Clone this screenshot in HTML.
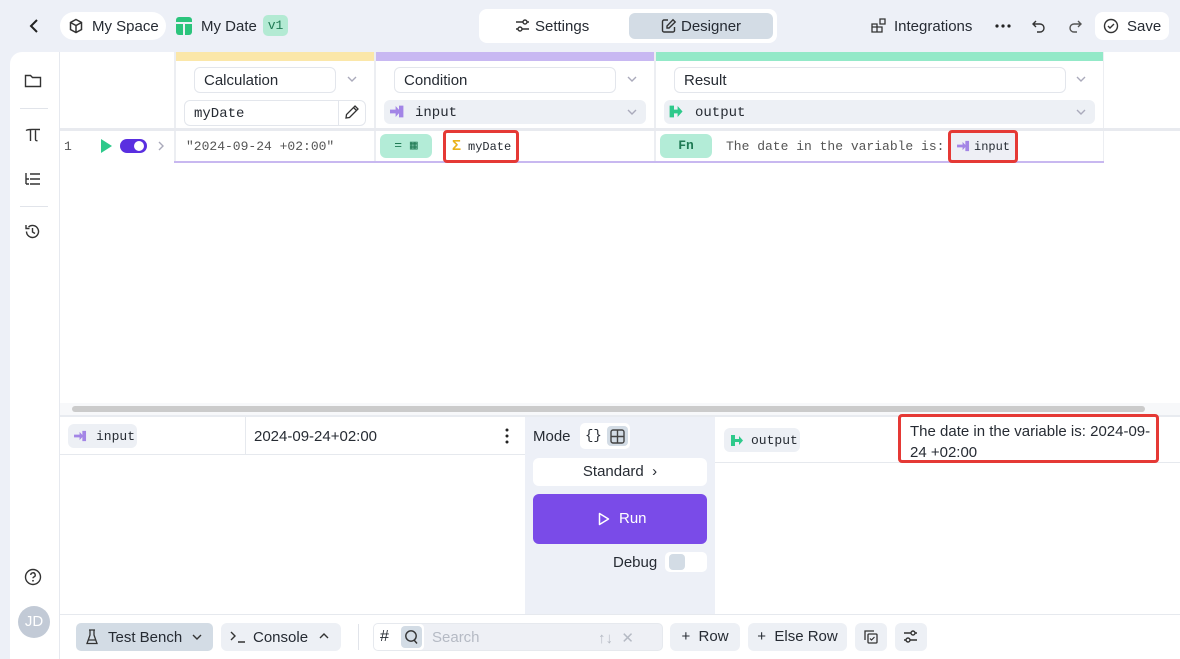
<!DOCTYPE html>
<html><head><style>
*{box-sizing:border-box;margin:0;padding:0}
body{width:1180px;height:659px;overflow:hidden;background:#edf0f7;font-family:"Liberation Sans",sans-serif;color:#262b33;position:relative;font-size:15px}
.a{position:absolute}
.mono{font-family:"Liberation Mono",monospace}
.pill{background:#fff;border-radius:14px}
.sel{border:1px solid #e3e6ec;border-radius:6px;background:#fff;height:26px;font-size:15px;padding:4px 9px}
.gb{background:#edf0f5;border-radius:6px}
svg{display:block}
</style></head><body>
<!-- top bar -->
<svg class="a" style="left:27px;top:18px" width="14" height="16" viewBox="0 0 14 16"><path d="M10 2L4 8l6 6" stroke="#222" stroke-width="2" fill="none"/></svg>
<div class="a pill" style="left:60px;top:12px;width:106px;height:28px"></div>
<svg class="a" style="left:68px;top:18px" width="16" height="16" viewBox="0 0 16 16"><path d="M8 1.5l5.5 3v7L8 14.5l-5.5-3v-7zM2.5 4.5L8 7.5l5.5-3M8 7.5v7" stroke="#333" stroke-width="1.5" fill="none"/></svg>
<div class="a" style="left:92px;top:18px;font-size:15px">My Space</div>
<div class="a" style="left:176px;top:17px;width:16px;height:18px;border-radius:3px;background:#2bc47c"></div>
<div class="a" style="left:176px;top:22px;width:16px;height:2px;background:#edf0f7"></div>
<div class="a" style="left:183px;top:22px;width:2px;height:13px;background:#edf0f7"></div>
<div class="a" style="left:201px;top:18px">My Date</div>
<div class="a mono" style="left:263px;top:15px;width:25px;height:21px;border-radius:5px;background:#b3ead3;color:#1f7a54;font-size:13px;text-align:center;line-height:21px">v1</div>
<div class="a" style="left:479px;top:9px;width:298px;height:34px;background:#fff;border-radius:8px"></div>
<div class="a" style="left:629px;top:13px;width:144px;height:26px;background:#d3dce5;border-radius:6px"></div>
<svg class="a" style="left:515px;top:18px" width="15" height="15" viewBox="0 0 15 15"><path d="M1 4h7M12 4h2M1 11h2M7 11h7" stroke="#333" stroke-width="1.4"/><circle cx="10" cy="4" r="2" stroke="#333" fill="none" stroke-width="1.4"/><circle cx="5" cy="11" r="2" stroke="#333" fill="none" stroke-width="1.4"/></svg>
<div class="a" style="left:535px;top:18px">Settings</div>
<svg class="a" style="left:661px;top:18px" width="16" height="16" viewBox="0 0 16 16"><path d="M7 2H3a1.5 1.5 0 0 0-1.5 1.5v9A1.5 1.5 0 0 0 3 14h9a1.5 1.5 0 0 0 1.5-1.5V9M12 1.8l2.2 2.2L8 10H6V8z" stroke="#333" stroke-width="1.4" fill="none"/></svg>
<div class="a" style="left:681px;top:18px">Designer</div>
<svg class="a" style="left:871px;top:18px" width="15" height="15" viewBox="0 0 15 15"><path d="M1 6h5v8H1zM6 9h5v5H6zM1 9h5M9 1h5v5H9z" stroke="#333" stroke-width="1.3" fill="none"/></svg>
<div class="a" style="left:894px;top:18px">Integrations</div>
<svg class="a" style="left:995px;top:24px" width="16" height="4" viewBox="0 0 16 4"><circle cx="2" cy="2" r="1.6" fill="#222"/><circle cx="8" cy="2" r="1.6" fill="#222"/><circle cx="14" cy="2" r="1.6" fill="#222"/></svg>
<svg class="a" style="left:1031px;top:18px" width="16" height="16" viewBox="0 0 16 16"><path d="M5 3L2 6l3 3M2 6h7a4 4 0 0 1 0 8H6" stroke="#333" stroke-width="1.4" fill="none"/></svg>
<svg class="a" style="left:1067px;top:18px" width="16" height="16" viewBox="0 0 16 16"><path d="M11 3l3 3-3 3M14 6H7a4 4 0 0 0 0 8h3" stroke="#555" stroke-width="1.4" fill="none"/></svg>
<div class="a pill" style="left:1095px;top:12px;width:74px;height:28px;border-radius:8px"></div>
<svg class="a" style="left:1103px;top:18px" width="16" height="16" viewBox="0 0 16 16"><circle cx="8" cy="8" r="6.5" stroke="#333" stroke-width="1.4" fill="none"/><path d="M5 8l2 2 4-4" stroke="#333" stroke-width="1.4" fill="none"/></svg>
<div class="a" style="left:1127px;top:18px">Save</div>

<!-- main panel -->
<div class="a" style="left:10px;top:52px;width:1170px;height:607px;background:#fff;border-radius:12px 0 0 0"></div>
<div class="a" style="left:59px;top:52px;width:1px;height:607px;background:#e6e9ef"></div>
<!-- sidebar icons -->
<svg class="a" style="left:24px;top:73px" width="18" height="16" viewBox="0 0 18 16"><path d="M1.5 2.5h5l2 2h8v9h-15z" stroke="#333" stroke-width="1.4" fill="none"/></svg>
<div class="a" style="left:20px;top:108px;width:28px;height:1px;background:#e1e4ea"></div>
<svg class="a" style="left:25px;top:127px" width="16" height="16" viewBox="0 0 16 16"><path d="M1 3.5C3 2 6 2.5 15 2.5M5.5 3v11M10.5 3v9.5c0 1 .8 1.5 2 1" stroke="#333" stroke-width="1.4" fill="none"/></svg>
<svg class="a" style="left:25px;top:172px" width="16" height="14" viewBox="0 0 16 14"><path d="M1 1v11M5 2h10M5 7h10M5 12h10M1 7h3M1 12h3" stroke="#333" stroke-width="1.4" fill="none"/></svg>
<div class="a" style="left:20px;top:206px;width:28px;height:1px;background:#e1e4ea"></div>
<svg class="a" style="left:24px;top:223px" width="17" height="17" viewBox="0 0 17 17"><path d="M2.5 8.5a6 6 0 1 0 2-4.5M2 2v3.5h3.5M8.5 5v4l2.5 1.5" stroke="#333" stroke-width="1.4" fill="none"/></svg>
<svg class="a" style="left:24px;top:568px" width="18" height="18" viewBox="0 0 18 18"><circle cx="9" cy="9" r="7.5" stroke="#333" stroke-width="1.4" fill="none"/><path d="M6.8 7a2.2 2.2 0 1 1 3 2c-.6.3-.8.7-.8 1.3" stroke="#333" stroke-width="1.4" fill="none"/><circle cx="9" cy="12.8" r=".9" fill="#333"/></svg>
<div class="a" style="left:18px;top:606px;width:32px;height:32px;border-radius:16px;background:#c2cad6;color:#fff;text-align:center;line-height:32px;font-size:15px">JD</div>

<!-- table headers -->
<div class="a" style="left:176px;top:52px;width:198px;height:9px;background:#fbe7a9"></div>
<div class="a" style="left:376px;top:52px;width:278px;height:9px;background:#c8b8f2"></div>
<div class="a" style="left:656px;top:52px;width:447px;height:9px;background:#93e9c8"></div>
<div class="a" style="left:174px;top:52px;width:2px;height:110px;background:#eceef2"></div>
<div class="a" style="left:374px;top:52px;width:2px;height:110px;background:#eceef2"></div>
<div class="a" style="left:654px;top:52px;width:2px;height:110px;background:#eceef2"></div>
<div class="a" style="left:1103px;top:52px;width:1px;height:110px;background:#eceef2"></div>
<div class="a" style="left:60px;top:128px;width:1120px;height:3px;background:#e8eaef"></div>

<div class="a sel" style="left:194px;top:67px;width:142px">Calculation</div>
<svg class="a" style="left:347px;top:76px" width="10" height="6" viewBox="0 0 10 6"><path d="M1 1l4 4 4-4" stroke="#aab" stroke-width="1.4" fill="none"/></svg>
<div class="a sel mono" style="left:184px;top:100px;width:182px;font-size:14px;padding-top:5px">myDate</div>
<div class="a" style="left:338px;top:100px;width:1px;height:26px;background:#e3e6ec"></div>
<svg class="a" style="left:344px;top:104px" width="16" height="16" viewBox="0 0 16 16"><path d="M11 2l3 3-8.5 8.5L2 14l.5-3.5zM9.5 3.5l3 3" stroke="#333" stroke-width="1.3" fill="none"/></svg>

<div class="a sel" style="left:394px;top:67px;width:222px">Condition</div>
<svg class="a" style="left:627px;top:76px" width="10" height="6" viewBox="0 0 10 6"><path d="M1 1l4 4 4-4" stroke="#aab" stroke-width="1.4" fill="none"/></svg>
<div class="a gb" style="left:384px;top:100px;width:262px;height:24px"></div>
<svg class="a" style="left:390px;top:105px" width="14" height="13" viewBox="0 0 14 13"><path d="M0 5h6V2l4 4.5-4 4.5V8H0z M9 1h4v11H9" fill="#a385e6" stroke="#a385e6" stroke-width=".8"/></svg>
<div class="a mono" style="left:415px;top:105px;font-size:14px">input</div>
<svg class="a" style="left:627px;top:109px" width="10" height="6" viewBox="0 0 10 6"><path d="M1 1l4 4 4-4" stroke="#aab" stroke-width="1.4" fill="none"/></svg>

<div class="a sel" style="left:674px;top:67px;width:392px">Result</div>
<svg class="a" style="left:1076px;top:76px" width="10" height="6" viewBox="0 0 10 6"><path d="M1 1l4 4 4-4" stroke="#aab" stroke-width="1.4" fill="none"/></svg>
<div class="a gb" style="left:664px;top:100px;width:431px;height:24px"></div>
<svg class="a" style="left:669px;top:105px" width="14" height="13" viewBox="0 0 14 13"><path d="M5 1H1v11h4M5 5h4V2l4 4.5-4 4.5V8H5z" fill="#2ec98b" stroke="#2ec98b" stroke-width=".8"/></svg>
<div class="a mono" style="left:695px;top:105px;font-size:14px">output</div>
<svg class="a" style="left:1076px;top:109px" width="10" height="6" viewBox="0 0 10 6"><path d="M1 1l4 4 4-4" stroke="#aab" stroke-width="1.4" fill="none"/></svg>

<!-- row 1 -->
<div class="a" style="left:174px;top:161px;width:930px;height:2px;background:#c8b8f0"></div>
<div class="a mono" style="left:64px;top:139px;font-size:13px;color:#555">1</div>
<svg class="a" style="left:100px;top:139px" width="12" height="14" viewBox="0 0 12 14"><path d="M1 0l11 7-11 7z" fill="#2ec98b"/></svg>
<div class="a" style="left:120px;top:139px;width:27px;height:14px;border-radius:7px;background:#5a2fe0"></div>
<div class="a" style="left:134px;top:141px;width:10px;height:10px;border-radius:5px;background:#fff"></div>
<svg class="a" style="left:158px;top:141px" width="6" height="10" viewBox="0 0 6 10"><path d="M1 1l4 4-4 4" stroke="#aab" stroke-width="1.4" fill="none"/></svg>
<div class="a mono" style="left:186px;top:139px;font-size:13px;color:#555">"2024-09-24 +02:00"</div>
<div class="a mono" style="left:380px;top:134px;width:52px;height:24px;border-radius:6px;background:#b3ecd7;color:#1f7a54;font-size:13px;text-align:center;line-height:24px">= ▦</div>
<div class="a" style="left:443px;top:130px;width:76px;height:33px;border:3px solid #e53935;border-radius:4px"></div>
<div class="a" style="left:452px;top:137px;color:#e9b21c;font-size:15px;font-weight:bold">Σ</div>
<div class="a mono" style="left:468px;top:140px;font-size:12px">myDate</div>
<div class="a mono" style="left:660px;top:134px;width:52px;height:24px;border-radius:6px;background:#b3ecd7;color:#1f7a54;font-size:13px;text-align:center;line-height:24px;font-weight:bold">Fn</div>
<div class="a mono" style="left:726px;top:139px;font-size:13px;color:#555">The date in the variable is:</div>
<div class="a" style="left:948px;top:130px;width:70px;height:33px;border:3px solid #e53935;border-radius:4px;background:#eeeff5"></div>
<svg class="a" style="left:957px;top:140px" width="13" height="12" viewBox="0 0 14 13"><path d="M0 5h6V2l4 4.5-4 4.5V8H0z M9 1h4v11H9" fill="#a385e6"/></svg>
<div class="a mono" style="left:974px;top:140px;font-size:12px">input</div>

<!-- scrollbar -->
<div class="a" style="left:60px;top:403px;width:1120px;height:12px;background:#f7f8fa"></div>
<div class="a" style="left:72px;top:406px;width:1073px;height:6px;border-radius:3px;background:#cbcbcb"></div>
<div class="a" style="left:60px;top:415px;width:1120px;height:2px;background:#e8ebf0"></div>

<!-- bottom left -->
<div class="a" style="left:60px;top:454px;width:465px;height:1px;background:#e6e9ee"></div>
<div class="a" style="left:245px;top:417px;width:1px;height:37px;background:#e6e9ee"></div>
<div class="a gb" style="left:68px;top:424px;width:69px;height:24px"></div>
<svg class="a" style="left:74px;top:430px" width="13" height="12" viewBox="0 0 14 13"><path d="M0 5h6V2l4 4.5-4 4.5V8H0z M9 1h4v11H9" fill="#a385e6"/></svg>
<div class="a mono" style="left:96px;top:429px;font-size:13px">input</div>
<div class="a" style="left:254px;top:428px;font-size:15px">2024-09-24+02:00</div>
<svg class="a" style="left:505px;top:428px" width="4" height="16" viewBox="0 0 4 16"><circle cx="2" cy="2" r="1.5" fill="#222"/><circle cx="2" cy="8" r="1.5" fill="#222"/><circle cx="2" cy="14" r="1.5" fill="#222"/></svg>
<!-- middle -->
<div class="a" style="left:525px;top:417px;width:190px;height:197px;background:#edf0f7"></div>
<div class="a" style="left:533px;top:428px">Mode</div>
<div class="a" style="left:580px;top:423px;width:50px;height:26px;background:#fff;border-radius:5px"></div>
<div class="a mono" style="left:585px;top:428px;font-size:14px">{}</div>
<div class="a" style="left:607px;top:426px;width:21px;height:20px;background:#d3dce5;border-radius:4px"></div>
<svg class="a" style="left:610px;top:429px" width="15" height="15" viewBox="0 0 15 15"><rect x="1" y="1" width="13" height="13" rx="2" stroke="#444" stroke-width="1.4" fill="none"/><path d="M7.5 1v13M1 7.5h13" stroke="#444" stroke-width="1.4"/></svg>
<div class="a" style="left:533px;top:458px;width:174px;height:28px;background:#fff;border-radius:6px;text-align:center;line-height:28px">Standard &nbsp;›</div>
<div class="a" style="left:533px;top:494px;width:174px;height:50px;background:#7a4be8;border-radius:6px"></div>
<svg class="a" style="left:598px;top:512px" width="12" height="14" viewBox="0 0 12 14"><path d="M1.5 1.5l9 5.5-9 5.5z" stroke="#fff" stroke-width="1.5" fill="none" stroke-linejoin="round"/></svg>
<div class="a" style="left:619px;top:510px;color:#fff">Run</div>
<div class="a" style="left:613px;top:554px">Debug</div>
<div class="a" style="left:665px;top:552px;width:42px;height:20px;background:#fff;border-radius:5px"></div>
<div class="a" style="left:669px;top:554px;width:16px;height:16px;background:#d3dce5;border-radius:4px"></div>
<!-- right -->
<div class="a" style="left:715px;top:462px;width:465px;height:1px;background:#e6e9ee"></div>
<div class="a gb" style="left:724px;top:428px;width:76px;height:24px"></div>
<svg class="a" style="left:730px;top:434px" width="14" height="13" viewBox="0 0 14 13"><path d="M5 1H1v11h4M5 5h4V2l4 4.5-4 4.5V8H5z" fill="#2ec98b"/></svg>
<div class="a mono" style="left:751px;top:433px;font-size:13px">output</div>
<div class="a" style="left:898px;top:414px;width:261px;height:49px;border:3px solid #e53935;border-radius:4px"></div>
<div class="a" style="left:910px;top:421px;font-size:15px;line-height:21px;width:245px">The date in the variable is: 2024-09-<br>24 +02:00</div>

<!-- footer -->
<div class="a" style="left:60px;top:614px;width:1120px;height:1px;background:#e6e9ee"></div>
<div class="a" style="left:76px;top:623px;width:137px;height:28px;background:#d3dce5;border-radius:5px"></div>
<svg class="a" style="left:86px;top:629px" width="12" height="16" viewBox="0 0 12 16"><path d="M4 1v5L1 14.5h10L8 6V1M3 1h6M2.5 11h7" stroke="#333" stroke-width="1.3" fill="none"/></svg>
<div class="a" style="left:108px;top:629px">Test Bench</div>
<svg class="a" style="left:192px;top:634px" width="10" height="6" viewBox="0 0 10 6"><path d="M1 1l4 4 4-4" stroke="#333" stroke-width="1.4" fill="none"/></svg>
<div class="a gb" style="left:221px;top:623px;width:120px;height:28px"></div>
<svg class="a" style="left:230px;top:631px" width="16" height="12" viewBox="0 0 16 12"><path d="M1 1l4 4-4 4M8 11h7" stroke="#333" stroke-width="1.4" fill="none"/></svg>
<div class="a" style="left:253px;top:629px">Console</div>
<svg class="a" style="left:319px;top:633px" width="10" height="6" viewBox="0 0 10 6"><path d="M1 5l4-4 4 4" stroke="#333" stroke-width="1.4" fill="none"/></svg>
<div class="a" style="left:358px;top:624px;width:1px;height:26px;background:#e1e4ea"></div>
<div class="a" style="left:373px;top:623px;width:290px;height:28px;border:1px solid #e6e9ee;border-radius:5px;background:#eef0f5"></div>
<div class="a" style="left:374px;top:624px;width:50px;height:26px;background:#fff;border-radius:4px"></div>
<div class="a" style="left:380px;top:628px;font-size:16px">#</div>
<div class="a" style="left:401px;top:626px;width:21px;height:22px;background:#d3dce5;border-radius:4px"></div>
<svg class="a" style="left:404px;top:629px" width="15" height="16" viewBox="0 0 15 16"><circle cx="7" cy="7" r="5.2" stroke="#333" stroke-width="1.4" fill="none"/><path d="M10 11l3 3.5" stroke="#333" stroke-width="1.4"/></svg>
<div class="a" style="left:432px;top:629px;color:#b5bac4">Search</div>
<div class="a" style="left:598px;top:629px;color:#b5bac4">↑↓ &nbsp;✕</div>
<div class="a gb" style="left:670px;top:623px;width:70px;height:28px;text-align:center;line-height:28px">+ &nbsp;Row</div>
<div class="a gb" style="left:748px;top:623px;width:99px;height:28px;text-align:center;line-height:28px">+ &nbsp;Else Row</div>
<div class="a gb" style="left:855px;top:623px;width:32px;height:28px"></div>
<svg class="a" style="left:863px;top:629px" width="16" height="16" viewBox="0 0 16 16"><path d="M2 11V2h9" stroke="#333" stroke-width="1.3" fill="none"/><rect x="5" y="5" width="9" height="9" rx="1" stroke="#333" stroke-width="1.3" fill="none"/><path d="M7 9.5l1.5 1.5 3-3" stroke="#333" stroke-width="1.2" fill="none"/></svg>
<div class="a gb" style="left:895px;top:623px;width:32px;height:28px"></div>
<svg class="a" style="left:903px;top:629px" width="15" height="15" viewBox="0 0 15 15"><path d="M1 4h7M12 4h2M1 11h2M7 11h7" stroke="#333" stroke-width="1.4"/><circle cx="10" cy="4" r="2" stroke="#333" fill="none" stroke-width="1.4"/><circle cx="5" cy="11" r="2" stroke="#333" fill="none" stroke-width="1.4"/></svg>
</body></html>
